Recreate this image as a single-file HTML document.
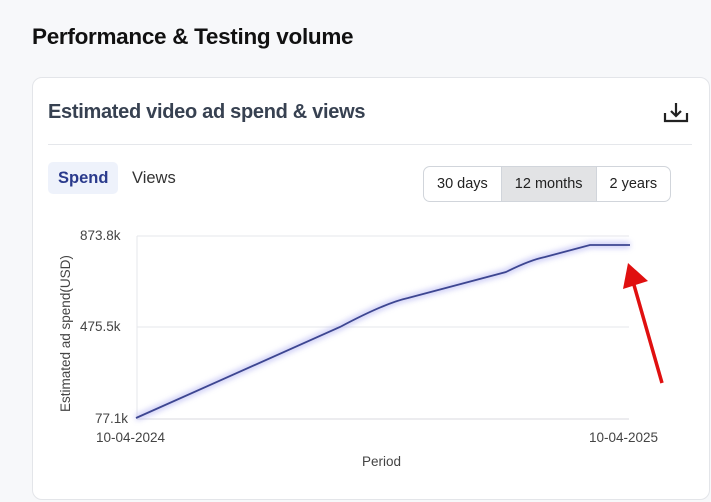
<html><head><style>
body{margin:0;width:711px;height:502px;background:#f7f8fa;font-family:"Liberation Sans",sans-serif;position:relative;overflow:hidden}
.t{position:absolute;left:32px;top:24px;font-size:22.5px;font-weight:bold;color:#111;letter-spacing:-0.3px}
.card{position:absolute;left:32px;top:77px;width:676px;height:421px;background:#fff;border:1px solid #e3e5e9;border-radius:10px}
.h{position:absolute;left:48px;top:101px;font-size:20px;font-weight:bold;color:#374151;letter-spacing:-0.3px}
.hr{position:absolute;left:48px;top:144px;width:644px;height:1px;background:#e5e7eb}
.tab{position:absolute;top:162px;height:32px;line-height:32px;font-size:16.5px;padding:0 10px}
.seg{position:absolute;left:423px;top:166px;height:34px;border:1px solid #d1d5db;border-radius:7px;display:flex;overflow:hidden;font-size:14.5px;color:#222}
.seg div{padding:0 13px;line-height:34px}
.s{position:absolute;font-size:13.5px;color:#444}
</style></head><body>
<div class="t">Performance &amp; Testing volume</div>
<div class="card"></div>
<div class="h">Estimated video ad spend &amp; views</div>
<svg style="position:absolute;left:662px;top:101px" width="28" height="24" viewBox="0 0 28 24"><path d="M3 12v8h22v-8" fill="none" stroke="#222" stroke-width="2.2"/><path d="M14 2v13M9 10l5 5 5-5" fill="none" stroke="#222" stroke-width="2.2"/></svg>
<div class="hr"></div>
<div class="tab" style="left:48px;background:#eef2fb;color:#2a3a8c;border-radius:5px;font-weight:bold">Spend</div>
<div class="tab" style="left:122px;color:#333">Views</div>
<div class="seg"><div>30 days</div><div style="background:#e2e3e5;border-left:1px solid #d1d5db;border-right:1px solid #d1d5db">12 months</div><div>2 years</div></div>
<svg style="position:absolute;left:0;top:0" width="711" height="502">
<defs><filter id="b" x="-10%" y="-20%" width="120%" height="140%"><feGaussianBlur stdDeviation="3"/></filter></defs>
<line x1="137" y1="236" x2="629" y2="236" stroke="#e5e7eb"/>
<line x1="137" y1="327" x2="629" y2="327" stroke="#e5e7eb"/>
<line x1="137" y1="419" x2="629" y2="419" stroke="#d8dadf"/>
<line x1="137" y1="236" x2="137" y2="419" stroke="#e5e7eb"/>
<path d="M136,418 L340,327 Q385,303 408,298 L506,272 Q530,260 545,257 L590,245 L630,245" fill="none" stroke="#a8a8f0" stroke-width="6" filter="url(#b)" opacity="0.6"/>
<path d="M136,418 L340,327 Q385,303 408,298 L506,272 Q530,260 545,257 L590,245 L630,245" fill="none" stroke="#3d4691" stroke-width="1.8"/>
<line x1="662" y1="383" x2="632" y2="278" stroke="#e01010" stroke-width="3.5"/>
<polygon points="623,289 628,263 648,281" fill="#e01010"/>
<text x="0" y="0" transform="translate(70,412) rotate(-90)" font-family="Liberation Sans" font-size="13.5" fill="#444">Estimated ad spend(USD)</text>
</svg>
<div class="s" style="left:80px;top:228px">873.8k</div>
<div class="s" style="left:80px;top:319px">475.5k</div>
<div class="s" style="left:95px;top:411px">77.1k</div>
<div class="s" style="left:96px;top:430px">10-04-2024</div>
<div class="s" style="left:589px;top:430px">10-04-2025</div>
<div class="s" style="left:362px;top:454px">Period</div>
</body></html>
